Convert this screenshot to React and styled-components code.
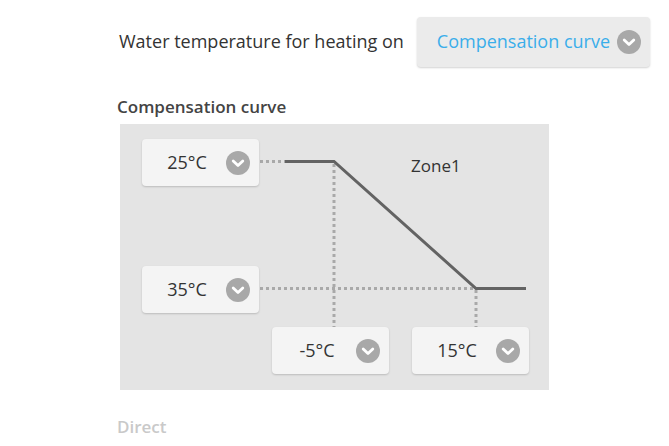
import React from 'react';
import styled, { createGlobalStyle } from 'styled-components';

const GlobalStyle = createGlobalStyle`
    body {
        margin: 0;
        background: #ffffff;
        font-family: "Open Sans", "Noto Sans", sans-serif;
        color: #333333;
    }
`;

const Page = styled('div')`
    width: 669px;
    height: 446px;
    overflow: hidden;
    padding: 17px 0 0 117px;
    box-sizing: border-box;
`;

const HeaderRow = styled('div')`
    display: flex;
    align-items: center;
    gap: 13px;
    padding-left: 2px;
`;

const HeaderLabel = styled('span')`
    font-size: 18px;
    font-weight: 500;
    color: #333333;
    margin-top: -3px;
`;

const Select = styled('div')`
    display: flex;
    align-items: center;
    gap: ${(p) => (p.$wide ? '7px' : '0')};
    width: ${(p) => p.$width}px;
    height: ${(p) => p.$height}px;
    padding: ${(p) => (p.$wide ? '0 10px 0 20px' : '0 9px 0 6px')};
    box-sizing: border-box;
    background: ${(p) => (p.$wide ? '#ebebeb' : '#f4f4f4')};
    border-radius: 4px;
    box-shadow: 0 1px 2px rgba(0, 0, 0, 0.18);
    font-size: 18px;
    font-weight: 500;
    color: ${(p) => (p.$wide ? '#3aaeea' : '#333333')};
`;

const Value = styled('span')`
    flex: 1;
    text-align: ${(p) => (p.$left ? 'left' : 'center')};
    margin-top: -2px;
    white-space: nowrap;
`;

const Chevron = styled('span')`
    display: inline-flex;
    align-items: center;
    justify-content: center;
    width: 24px;
    height: 24px;
    border-radius: 50%;
    background: #a8a8a8;
    flex-shrink: 0;
`;

const SectionLabel = styled('div')`
    margin-top: ${(p) => p.$gap}px;
    font-size: 17px;
    font-weight: 600;
    line-height: 22px;
    color: ${(p) => (p.$muted ? '#c9c9c9' : '#444444')};
`;

const ChartPanel = styled('div')`
    position: relative;
    width: 429px;
    height: 266px;
    margin: 6px 0 0 3px;
    background: #e4e4e4;
`;

const Curve = styled('svg')`
    position: absolute;
    inset: 0;
`;

const Node = styled('div')`
    position: absolute;
    left: ${(p) => p.$x}px;
    top: ${(p) => p.$y}px;
`;

const ZoneLabel = styled('div')`
    position: absolute;
    left: 291px;
    top: 30px;
    font-size: 17px;
    font-weight: 500;
    color: #333333;
`;

const ChevronIcon = () => (
    <Chevron>
        <svg width="14" height="14" viewBox="0 0 14 14">
            <path d="M2.2 5 L7 9.6 L11.8 5" fill="none" stroke="#ffffff" strokeWidth="2.8" strokeLinecap="round" strokeLinejoin="round" />
        </svg>
    </Chevron>
);

const TempSelect = ({ value, x, y }) => (
    <Node $x={x} $y={y}>
        <Select $width={117} $height={47}>
            <Value>{value}</Value>
            <ChevronIcon />
        </Select>
    </Node>
);

const App = () => {
    return (
        <Page>
            <GlobalStyle />
            <HeaderRow>
                <HeaderLabel>Water temperature for heating on</HeaderLabel>
                <Select $wide $width={233} $height={50}>
                    <Value $left>Compensation curve</Value>
                    <ChevronIcon />
                </Select>
            </HeaderRow>

            <SectionLabel $gap={29}>Compensation curve</SectionLabel>
            <ChartPanel>
                <Curve width="429" height="266" viewBox="0 0 429 266">
                    <g stroke="#a9a9a9" strokeWidth="3" strokeDasharray="3 3" fill="none">
                        <line x1="140" y1="37.5" x2="165" y2="37.5" />
                        <line x1="140" y1="164.5" x2="356" y2="164.5" />
                        <line x1="214" y1="40" x2="214" y2="203" />
                        <line x1="356" y1="166" x2="356" y2="203" />
                    </g>
                    <polyline points="165,37.5 214,37.5 356,164.5 406,164.5" fill="none" stroke="#636363" strokeWidth="3" />
                </Curve>
                <ZoneLabel>Zone1</ZoneLabel>
                <TempSelect value="25°C" x={22} y={15} />
                <TempSelect value="35°C" x={22} y={142} />
                <TempSelect value="-5°C" x={152} y={203} />
                <TempSelect value="15°C" x={292} y={203} />
            </ChartPanel>

            <SectionLabel $gap={26} $muted>Direct</SectionLabel>
        </Page>
    );
};

export default App;
